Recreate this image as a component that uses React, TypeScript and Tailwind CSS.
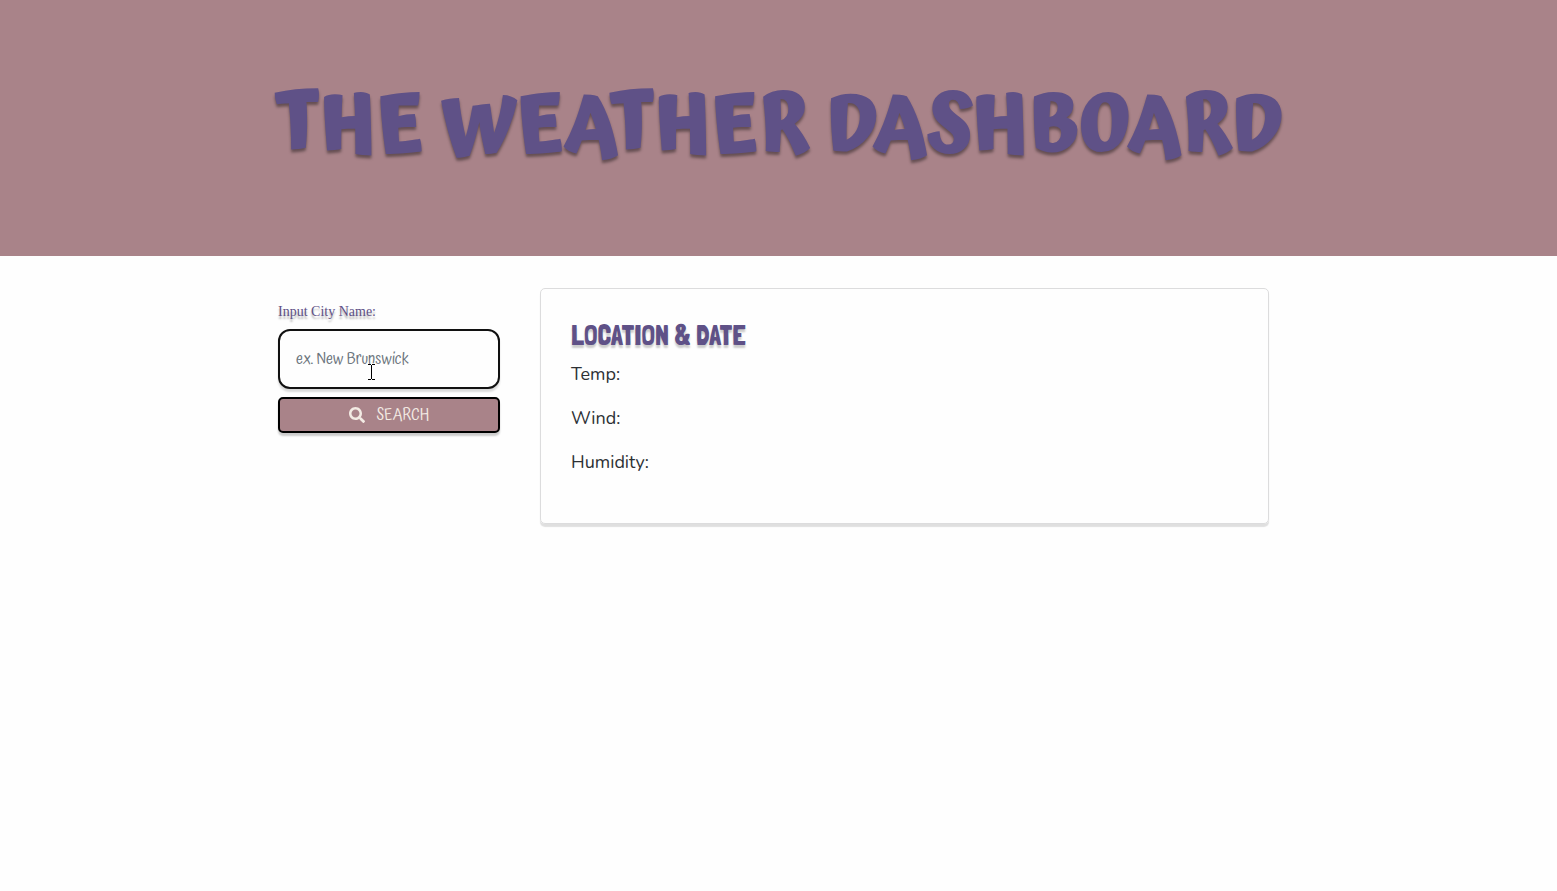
import React from "react";
import { FaSearch } from "react-icons/fa";

const readings = ["Temp:", "Wind:", "Humidity:"];

function TextCursor() {
  return (
    <svg
      aria-hidden="true"
      className="pointer-events-none absolute top-[35px] left-[90px]"
      width="7"
      height="16"
      viewBox="0 0 7 16"
      fill="none"
      stroke="#000"
      shapeRendering="crispEdges"
    >
      <path d="M0 .5H3M4 .5H7M3.500 1V15M0 15.500H3M4 15.500H7" />
    </svg>
  );
}

export default function App() {
  return (
    <div className="min-h-screen bg-[#fefefe] font-['Nunito','Open_Sans',sans-serif] text-[#2c3034]">
      <header className="bg-[#a98389] px-8 py-16">
        <h1 className="text-center font-['Atma','Lato',sans-serif] text-[80px] leading-[128px] font-bold whitespace-nowrap text-[#5f5187] uppercase [text-shadow:0_3px_3px_rgba(0,0,0,0.4)]">
          The Weather Dashboard
        </h1>
      </header>

      <main className="mx-auto flex max-w-[1001px] items-start gap-10 pt-8 pr-[10px]">
        <form className="flex w-[222px] shrink-0 flex-col pt-[13px]" onSubmit={(e) => e.preventDefault()}>
          <label
            htmlFor="city"
            className="mb-[6px] font-['Liberation_Serif',serif] text-sm leading-[22px] text-[#5f5187] [text-shadow:0_3px_2px_rgba(0,0,0,0.3)]"
          >
            Input City Name:
          </label>
          <div className="relative mb-2">
            <input
              id="city"
              type="text"
              placeholder="ex. New Brunswick"
              className="block h-[60px] w-full rounded-xl border-2 border-[#111] bg-[#fefefe] px-4 font-['Atma','Open_Sans',sans-serif] text-base font-normal shadow-[0_3px_2px_rgba(0,0,0,0.14)] outline-none placeholder:text-[#6c757d]"
            />
            <TextCursor />
          </div>
          <button
            type="submit"
            className="flex h-9 items-center justify-center gap-3 rounded-[5px] border-2 border-black bg-[#a98389] font-['Atma','Open_Sans',sans-serif] text-base font-normal text-[#f3ebe4] uppercase shadow-[0_3px_2px_rgba(0,0,0,0.2)]"
          >
            <FaSearch aria-hidden="true" className="size-4" />
            Search
          </button>
        </form>

        <section className="min-w-0 flex-1 rounded-[5px] border border-[#dcdcdd] px-[30px] pt-[31px] pb-[47px] shadow-[0_3px_1px_rgba(0,0,0,0.12)]">
          <h2 className="mb-2 font-['Londrina_Solid','Open_Sans',sans-serif] text-[28px] leading-8 font-normal text-[#5f5187] uppercase [text-shadow:0_3px_2px_rgba(0,0,0,0.2)]">
            Location &amp; Date
          </h2>
          {readings.map((name) => (
            <p key={name} className="mb-4 text-lg leading-7 last:mb-0">
              {name}
            </p>
          ))}
        </section>
      </main>
    </div>
  );
}
